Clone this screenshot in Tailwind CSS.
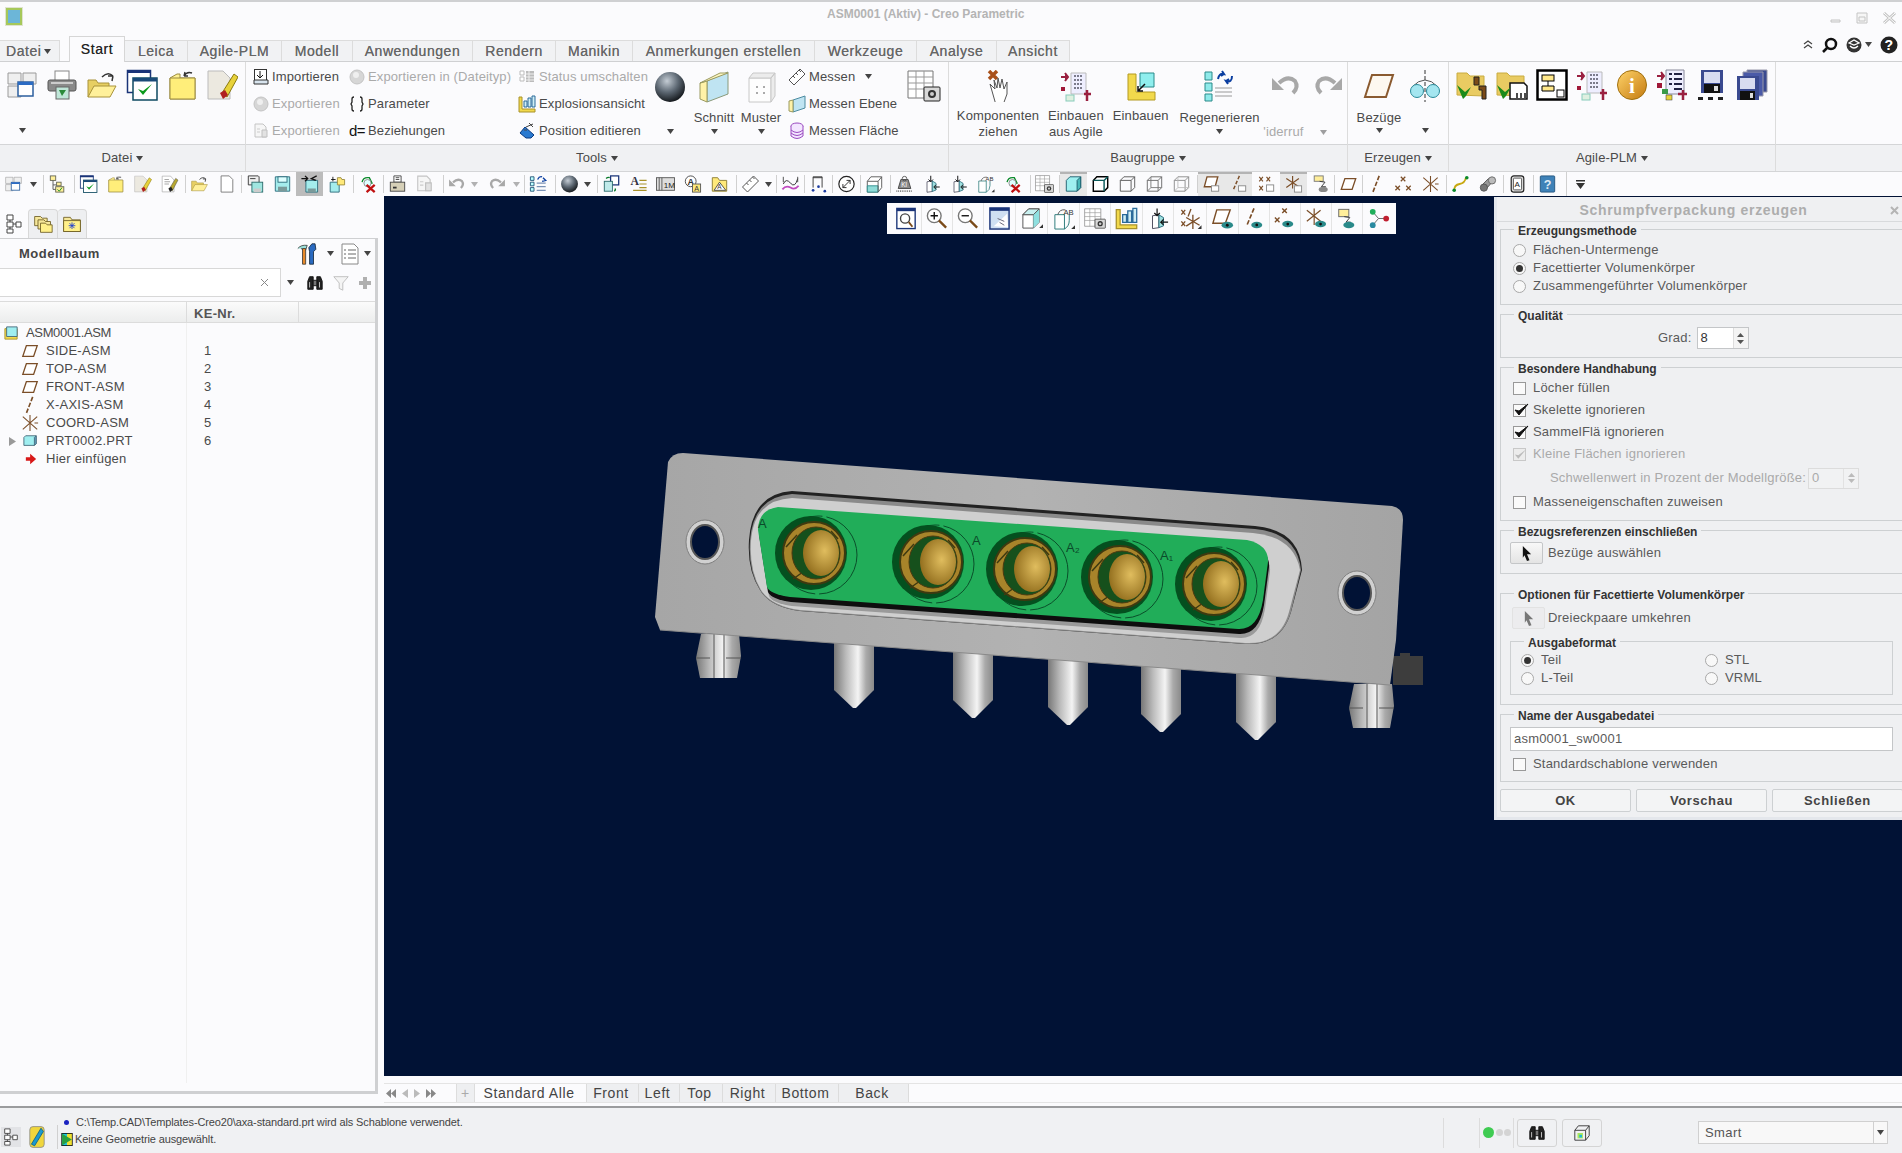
<!DOCTYPE html>
<html lang="de">
<head>
<meta charset="UTF-8">
<title>ASM0001 (Aktiv) - Creo Parametric</title>
<script src="https://cdn.jsdelivr.net/npm/@tailwindcss/browser@4"></script>
</head>
<body class="w-[1902px] h-[1153px] overflow-hidden bg-[#fbfbfd] text-[13px] text-[#4a4a4a] [font-family:'Liberation_Sans',Arial,sans-serif]">

<!-- shared gradients -->
<svg class="absolute h-0 w-0">
  <defs>
    <radialGradient id="gBall" cx="40%" cy="30%" r="75%"><stop offset="0" stop-color="#c4ccd4"/><stop offset=".5" stop-color="#5d6873"/><stop offset="1" stop-color="#0c0f12"/></radialGradient>
    <linearGradient id="gGold" x1="0" y1="0" x2="1" y2="1"><stop offset="0" stop-color="#ffd36a"/><stop offset="1" stop-color="#c47a10"/></linearGradient>
    <linearGradient id="gPin" x1="0" x2="1"><stop offset="0" stop-color="#777"/><stop offset=".3" stop-color="#bbb"/><stop offset=".6" stop-color="#f4f4f4"/><stop offset=".8" stop-color="#aaa"/><stop offset="1" stop-color="#8a8a8a"/></linearGradient>
    <linearGradient id="gPlate" x1="0" y1="0" x2="1" y2="0"><stop offset="0" stop-color="#a6a6a6"/><stop offset=".5" stop-color="#b2b2b2"/><stop offset="1" stop-color="#a4a4a4"/></linearGradient>
    <radialGradient id="gCone" cx="60%" cy="45%" r="60%"><stop offset="0" stop-color="#e0bd5e"/><stop offset="1" stop-color="#94701f"/></radialGradient>
  </defs>
</svg>

<!-- icon sheet -->
<svg class="hidden">
  <symbol id="dd" viewBox="0 0 7 5"><path d="M0 0h7L3.500 5z" fill="#444"/></symbol>
  <symbol id="win" viewBox="0 0 32 32"><path fill="#efefef" stroke="#9a9a9a" d="M2 4h13v11H2zM17 4h13v11H17zM2 17h13v11H2z"/><rect x="12" y="13" width="15" height="14" fill="#fff" stroke="#2c5f9e" stroke-width="1.500"/><rect x="12" y="13" width="15" height="3" fill="#2c6cc4"/></symbol>
  <symbol id="print" viewBox="0 0 32 32"><rect x="9" y="2" width="14" height="12" fill="#fff" stroke="#888"/><rect x="2" y="11" width="28" height="11" rx="2" fill="#8a8a8a" stroke="#555"/><rect x="5" y="13" width="22" height="2" fill="#ccc"/><rect x="10" y="18" width="13" height="12" fill="#bfe6d8" stroke="#666"/><path d="M13 21l3 6 4-6" fill="#2a8a3a"/></symbol>
  <symbol id="fopen" viewBox="0 0 32 32"><path d="M2 28V11h8l2 3h11v4" fill="#e7cf63" stroke="#a8923a"/><path d="M2 28l6-11h22l-6 11z" fill="#fff09a" stroke="#a8923a"/><path d="M16 8q6-6 11-1m0 0l-1 5m1-5l-5 0" fill="none" stroke="#333" stroke-width="1.500"/></symbol>
  <symbol id="chk" viewBox="0 0 32 32"><rect x="1.500" y="1.500" width="23" height="22" fill="#fff" stroke="#1a3478" stroke-width="1.500"/><rect x="1" y="1" width="24" height="3" fill="#1a3478"/><rect x="7" y="9" width="24" height="22" fill="#fff" stroke="#0e4a60" stroke-width="1.500"/><rect x="7" y="9" width="24" height="3.500" fill="#1a4a78"/><path d="M12 20l5 6 9-11-9 7z" fill="#0b9a1c"/></symbol>
  <symbol id="fold" viewBox="0 0 32 32"><path d="M4 30V9l7-4h3v4h15v21z" fill="#fff294" stroke="#9a8a40"/><path d="M4 30V9h25v21z" fill="#ffee7a" stroke="#9a8a40"/><path d="M18 7q3-5 8-3m-8 3l1-4m-1 4l4 0" fill="none" stroke="#333" stroke-width="1.400"/></symbol>
  <symbol id="edit" viewBox="0 0 32 32"><path d="M2 2h15l7 7v21H2z" fill="#ece9e0" stroke="#bbb"/><path d="M16 24L28 5l4 3-11 20z" fill="#e8d23a" stroke="#8a7a10"/><path d="M14 24l5-3 3 5-5 4z" fill="#b02020"/></symbol>
  <symbol id="edit2" viewBox="0 0 32 32"><path d="M3 2h15l6 7v21H3z" fill="#fff" stroke="#999"/><path d="M7 8h8M7 12h10M7 16h8" stroke="#666"/><path d="M16 24L27 6l4 3-10 19z" fill="#b8a830" stroke="#554"/><path d="M14 24l5-3 3 5-5 4z" fill="#222"/></symbol>
  <symbol id="ball" viewBox="0 0 32 32"><circle cx="16" cy="16" r="15" fill="url(#gBall)"/></symbol>
  <symbol id="schnitt" viewBox="0 0 32 32"><path d="M9 10L30 1v22L9 31z" fill="#bfe4f2" stroke="#8a9a7a"/><path d="M2 12l7-2v21l-7-3z" fill="#fff2a8" stroke="#9a9a60"/><path d="M2 12L22 2h8L9 10z" fill="#fdf6c0" stroke="#9a9a60"/></symbol>
  <symbol id="muster" viewBox="0 0 32 32"><path d="M4 7h22v24H4z" fill="#fdfdfd" stroke="#c8c8c8"/><path d="M26 7l4-5v23l-4 6zM4 7l4-5h22l-4 5z" fill="#ececec" stroke="#c8c8c8"/><path d="M11 15h2v2h-2zM18 15h2v2h-2zM11 21h2v2h-2zM18 21h2v2h-2z" fill="#aaa"/></symbol>
  <symbol id="tcam" viewBox="0 0 34 32"><path d="M1 1h25v27H1z" fill="#fff" stroke="#777"/><path d="M1 7h25M1 13h25M1 19h25M9 1v27M17 1v27" stroke="#999"/><rect x="17" y="17" width="16" height="14" rx="1" fill="#d8d8d8" stroke="#222"/><circle cx="25" cy="24" r="4" fill="#333"/><circle cx="25" cy="24" r="2" fill="#ccc"/></symbol>
  <symbol id="hand" viewBox="0 0 32 32"><path d="M7 1l8 8M15 1L7 9" stroke="#a8501a" stroke-width="3.500"/><path d="M8 14l5 5-1-9 3 8 1-10 2 10 2-9 2 10 3-7 0 12-4 11H14z" fill="#fff" stroke="#555"/></symbol>
  <symbol id="agin" viewBox="0 0 32 32"><path d="M11 3h15v21H11z" fill="#eef" stroke="#bbb"/><path d="M14 6h9M14 10h9M14 14h9M14 18h9" stroke="#556" stroke-width="1.500" stroke-dasharray="2 1"/><path d="M1 7h7M5 3l3 4-3 4" stroke="#9a2040" fill="#9a2040" stroke-width="2"/><rect x="1" y="17" width="4" height="4" fill="#a01838"/><rect x="6" y="25" width="8" height="6" fill="#dff0e0" stroke="#8cb"/><path d="M24 24h7M27 20v11" stroke="#9a2040" stroke-width="2.500"/></symbol>
  <symbol id="einb" viewBox="0 0 32 32"><path d="M3 4h8v18h19v8H3z" fill="#f2d94c" stroke="#b49a20"/><path d="M15 3h14v14H15z" fill="#8feeee" stroke="#2a8a8a"/><path d="M20 14l-7 7m0-5v5h5" stroke="#111" stroke-width="1.500" fill="none"/></symbol>
  <symbol id="regen" viewBox="0 0 32 32"><path d="M1 2h7v8H1zM1 13h7v8H1zM1 24h7v7H1z" fill="#8feaea" stroke="#2a8a8a"/><path d="M14 9q1-6 6-5l-2-3m2 3l-3 2M28 6q0 7-6 5l2 3m-2-3l3-2" stroke="#0a3ea0" stroke-width="2" fill="none"/><path d="M11 18h17M11 22h17M11 26h17" stroke="#999"/></symbol>
  <symbol id="undo" viewBox="0 0 32 32"><path d="M8 13q9-8 16-2 4 6-2 12" fill="none" stroke="#a8a8a8" stroke-width="4"/><path d="M1 8v12h12z" fill="#a8a8a8"/></symbol>
  <symbol id="redo" viewBox="0 0 32 32"><path d="M24 13q-9-8-16-2-4 6 2 12" fill="none" stroke="#a8a8a8" stroke-width="4"/><path d="M31 8v12H19z" fill="#a8a8a8"/></symbol>
  <symbol id="plane" viewBox="0 0 32 32"><path d="M9 5h21l-7 22H2z" fill="#fdf8f0" stroke="#8a5a30" stroke-width="2"/></symbol>
  <symbol id="plane2" viewBox="0 0 20 20"><path d="M6 4h12l-4 12H2z" fill="#fff" stroke="#7b4e28" stroke-width="1.500"/></symbol>
  <symbol id="mirror" viewBox="0 0 32 32"><path d="M16 0v32" stroke="#333" stroke-dasharray="4 2"/><path d="M3 17q13-14 26 0" fill="none" stroke="#555"/><circle cx="8" cy="21" r="6.500" fill="#a4e6f0" stroke="#2a8a9a"/><circle cx="24" cy="21" r="6.500" fill="#a4e6f0" stroke="#2a8a9a"/></symbol>
  <symbol id="ag1" viewBox="0 0 32 32"><path d="M1 26V4h10l3 3h14v20z" fill="#e9cb62" stroke="#c9ac40"/><path d="M1 16l8 7 6-5-5 9-3 3z" fill="#1a8a1a"/><path d="M18 8h5v8h-5zM23 17h7v13h-4V21h-3z" fill="#7a4a18" stroke="#222"/></symbol>
  <symbol id="ag2" viewBox="0 0 32 32"><path d="M1 26V4h10l3 3h14v20z" fill="#e9cb62" stroke="#c9ac40"/><path d="M14 14h14l3 3v13H14z" fill="#fff" stroke="#111" stroke-width="1.500"/><path d="M1 16l8 7 6-5-5 9-3 3z" fill="#1a8a1a"/><path d="M21 24v5M25 24v5M29 24v5" stroke="#111" stroke-width="1.500"/></symbol>
  <symbol id="ag3" viewBox="0 0 32 32"><rect x="1.500" y="1.500" width="29" height="29" fill="#fff" stroke="#000" stroke-width="2.500"/><rect x="6" y="6" width="12" height="6" fill="#ffe88a" stroke="#000"/><path d="M12 12v5M6 17h12v5H6z" fill="#ffe88a" stroke="#000"/><rect x="21" y="21" width="7" height="7" fill="#fff" stroke="#000"/></symbol>
  <symbol id="ag5" viewBox="0 0 32 32"><circle cx="16" cy="16" r="14.500" fill="url(#gGold)" stroke="#a0700f"/><text x="16" y="24" font-size="21" font-weight="700" font-family="Liberation Serif" text-anchor="middle" fill="#fff">i</text></symbol>
  <symbol id="ag6" viewBox="0 0 32 32"><path d="M10 1h18v24H10z" fill="#eef" stroke="#889"/><path d="M13 5h3M13 10h3M13 15h3M18 5h8M18 10h8M18 15h8M18 20h8" stroke="#224" stroke-width="2"/><path d="M1 7h7M5 3l3 4-3 4" stroke="#9a2040" fill="#9a2040" stroke-width="2"/><rect x="1" y="14" width="5" height="5" fill="#a01838"/><rect x="6" y="20" width="6" height="5" fill="#3a9a4a"/><rect x="10" y="26" width="6" height="5" fill="#e8d23a" stroke="#333" stroke-width=".5"/><path d="M22 25h9M27 21v10" stroke="#9a2040" stroke-width="2.500"/></symbol>
  <symbol id="ag7" viewBox="0 0 32 32"><path d="M5 1h22v23H5z" fill="#3a4a90"/><path d="M8 3h16v11H8z" fill="#d8dcf0"/><path d="M8 15h16v9H8z" fill="#111"/><rect x="18" y="17" width="4" height="5" fill="#ddd"/><path d="M2 28h5v3H2zM12 28h5v3h-5zM22 28h5v3h-5z" fill="#222"/></symbol>
  <symbol id="ag8" viewBox="0 0 32 32"><path d="M11 1h20v22H11z" fill="#3a4a90" stroke="#99a"/><path d="M7 3h20v24H7z" fill="#4a5aa8" stroke="#99a"/><path d="M1 7h22v24H1z" fill="#3a4a90"/><path d="M4 9h15v11H4z" fill="#d8dcf0"/><path d="M4 22h15v9H4z" fill="#111"/><rect x="14" y="24" width="3" height="5" fill="#ddd"/></symbol>
  <symbol id="import" viewBox="0 0 16 16"><rect x="1.500" y=".5" width="12" height="13" fill="#fff" stroke="#333"/><path d="M7 2v7m-3-3l3 3 3-3" fill="none" stroke="#111"/><path d="M1 11h14v4H1z" fill="#d8e4ee" stroke="#333"/></symbol>
  <symbol id="gball" viewBox="0 0 16 16"><circle cx="8" cy="8" r="7" fill="#d6d6d6" stroke="#c4c4c4"/><circle cx="7" cy="6" r="3" fill="#efefef"/></symbol>
  <symbol id="gexp" viewBox="0 0 16 16"><path d="M2 1h8l3 3v10H2z" fill="#f6f6f6" stroke="#c4c4c4"/><path d="M9 7h5v7H9z" fill="#e2e2e2" stroke="#c0c0c0"/><path d="M4 6h3M4 9h3" stroke="#ccc"/></symbol>
  <symbol id="brace" viewBox="0 0 16 16"><path d="M5 1Q3 1 3 3v3L2 8l1 2v3q0 2 2 2M11 1q2 0 2 2v3l1 2-1 2v3q0 2-2 2" fill="none" stroke="#222" stroke-width="1.300"/></symbol>
  <symbol id="stat" viewBox="0 0 16 16"><path d="M1 2h4v4H1zM1 8h4v4H1z" fill="#fff" stroke="#bbb"/><rect x="7" y="2" width="8" height="11" fill="#bbb"/><path d="M7 5h8M7 8h8M7 11h8M10 2v11" stroke="#eee"/></symbol>
  <symbol id="expl" viewBox="0 0 18 18"><path d="M1 2h3v12h13v3H1z" fill="#f2d94c" stroke="#a8922a"/><path d="M6 6h3v6H6zM10 3h3v9h-3zM14 1h3v11h-3z" fill="#cfeef5" stroke="#2a6a9a"/></symbol>
  <symbol id="pos" viewBox="0 0 18 18"><path d="M2 11l5-6 9 8-3 3H8z" fill="#2a7ad0" stroke="#0a3a80"/><path d="M8 5l7-3M11 1l4 4M6 8h3" stroke="#444"/></symbol>
  <symbol id="ruler" viewBox="0 0 18 18"><path d="M1 12L12 1l5 5L6 17z" fill="#fff" stroke="#555"/><path d="M5 8l2 2M8 5l2 2M11 2l2 2" stroke="#555"/></symbol>
  <symbol id="mplane" viewBox="0 0 18 18"><path d="M5 5l12-4v12L5 17z" fill="#bfe4f2" stroke="#4a8aa0"/><path d="M1 6l4-1v12l-4-1z" fill="#fff2a8" stroke="#9a9a60"/></symbol>
  <symbol id="marea" viewBox="0 0 18 18"><ellipse cx="9" cy="4" rx="6" ry="3" fill="#f3e6ff" stroke="#9a4ac0"/><path d="M3 4v10q6 5 12 0V4M3 8q6 5 12 0M3 11q6 5 12 0" fill="#f3e6ff" stroke="#9a4ac0"/></symbol>
  <symbol id="tree" viewBox="0 0 20 20"><rect x="2" y="1" width="6" height="5" fill="#fff09a" stroke="#665"/><path d="M5 6v10h4M5 11h4" stroke="#555" fill="none"/><rect x="9" y="8" width="5" height="4" fill="#fff09a" stroke="#665"/><rect x="8" y="13" width="9" height="6" fill="#fff09a" stroke="#665"/><path d="M10 16l2 2 3-4" stroke="#0a8a1a" fill="none"/></symbol>
  <symbol id="doc" viewBox="0 0 20 20"><path d="M4 1h9l4 4v14H4z" fill="#fff" stroke="#777"/></symbol>
  <symbol id="savea" viewBox="0 0 20 20"><path d="M2 1h11l1 1v9H2z" fill="#eee" stroke="#333"/><rect x="6" y="8" width="12" height="11" fill="#9fe6e0" stroke="#2a6a6a"/><path d="M4 4h6" stroke="#333"/><rect x="8" y="15" width="8" height="4" fill="#ccc"/></symbol>
  <symbol id="save" viewBox="0 0 20 20"><path d="M2 2h16v16H2z" fill="#a4ecec" stroke="#2a6a7a"/><rect x="5" y="2" width="10" height="6" fill="#dff" stroke="#2a6a7a"/><rect x="5" y="13" width="10" height="5" fill="#7a9a9a"/></symbol>
  <symbol id="savear" viewBox="0 0 20 20"><path d="M6 6h13v13H6z" fill="#a4ecec" stroke="#2a6a7a"/><rect x="8" y="15" width="9" height="4" fill="#7a9a9a"/><path d="M1 4h7m-3-3l3 3-3 3M18 1l-6 3 5 2" stroke="#111" fill="none" stroke-width="1.400"/></symbol>
  <symbol id="savefl" viewBox="0 0 20 20"><path d="M3 8h10v11H3z" fill="#a4ecec" stroke="#2a6a7a"/><path d="M11 3h4l1 2h3v6h-8z" fill="#ffe97a" stroke="#9a8a40"/><path d="M4 5h5M6 2v5" stroke="#111"/></symbol>
  <symbol id="regx" viewBox="0 0 20 20"><path d="M4 8q1-6 8-5l3 6-4 1" fill="#fff" stroke="#0a8a2a" stroke-width="1.500"/><circle cx="10" cy="9" r="4" fill="#dff" stroke="#888"/><path d="M9 11l9 8m0-8l-9 8" stroke="#c01010" stroke-width="2.500"/></symbol>
  <symbol id="prt" viewBox="0 0 20 20"><path d="M6 1h8v7H6z" fill="#fff" stroke="#444"/><path d="M8 3h4M8 5h4" stroke="#444"/><rect x="2" y="8" width="16" height="10" fill="#d6d0b8" stroke="#444"/><path d="M5 13h4v2H5z" fill="#333"/></symbol>
  <symbol id="reglist" viewBox="0 0 20 20"><path d="M1 2h4v4H1zM1 8h4v4H1zM1 14h4v4H1z" fill="#bff" stroke="#257"/><path d="M8 9h10M8 13h10M8 17h10" stroke="#4a6a9a"/><path d="M9 5q2-4 5-3M15 3l3 3-4 1" stroke="#0a3ea0" fill="none" stroke-width="1.500"/></symbol>
  <symbol id="swap" viewBox="0 0 20 20"><rect x="9" y="1" width="9" height="10" fill="#fff" stroke="#1a3478" stroke-width="1.400"/><rect x="2" y="7" width="9" height="11" fill="#bfeaea" stroke="#2a6a6a"/><path d="M4 4q2-2 4-1M14 15q1 2-1 3" stroke="#0a7a2a" fill="none" stroke-width="1.500"/></symbol>
  <symbol id="alist" viewBox="0 0 20 20"><text x="1" y="11" font-size="13" font-weight="700" font-family="Liberation Serif" fill="#334">A</text><path d="M11 6h8M11 10h8M11 14h8M4 17h15" stroke="#a8922a" stroke-width="1.300"/></symbol>
  <symbol id="m1" viewBox="0 0 22 20"><rect x="1" y="3" width="20" height="14" fill="#ddd" stroke="#555"/><path d="M4 3v14M7 3v14" stroke="#555"/><text x="9" y="14" font-size="9" font-family="Liberation Sans" fill="#222">1M</text></symbol>
  <symbol id="an" viewBox="0 0 20 20"><circle cx="8" cy="7" r="6" fill="#fff" stroke="#444"/><text x="4.500" y="11" font-size="10" font-weight="700" fill="#333">A</text><rect x="10" y="10" width="9" height="9" fill="#ffe97a" stroke="#555"/><text x="12" y="18" font-size="8" fill="#333">A</text></symbol>
  <symbol id="af" viewBox="0 0 20 20"><path d="M2 18V3h6l2 3h8v12z" fill="#ffe97a" stroke="#8a7a30"/><path d="M10 8l7 9H4z" fill="#fff" stroke="#444"/><text x="7.500" y="16" font-size="7" fill="#333">A</text></symbol>
  <symbol id="curve" viewBox="0 0 20 20"><path d="M2 10q3-7 8-1t8-5" stroke="#222" fill="none"/><path d="M1 16q4-5 9-2t9-2" stroke="#c04ac0" fill="none" stroke-width="2"/><path d="M2 2v6M18 2v6" stroke="#444"/></symbol>
  <symbol id="dim" viewBox="0 0 20 20"><path d="M4 14V2h10v12M4 3h10" fill="none" stroke="#333"/><circle cx="4" cy="17" r="1.500" fill="#1a3aa0"/><circle cx="10" cy="13" r="1.500" fill="#1a3aa0"/><circle cx="17" cy="18" r="1.500" fill="#1a3aa0"/></symbol>
  <symbol id="circ" viewBox="0 0 20 20"><circle cx="10" cy="10" r="8.500" fill="#fff" stroke="#222" stroke-width="1.300"/><path d="M6 14l8-8m0 0h-4m4 0v4M6 14h4M6 14v-4" stroke="#222" fill="none"/></symbol>
  <symbol id="cubem" viewBox="0 0 20 20"><path d="M2 7l4-5h12v12l-4 5H2z" fill="#fff" stroke="#555"/><path d="M2 12h12v7H2z" fill="#8fdcd8" stroke="#2a8a8a"/><path d="M2 7h12v12M14 7l4-5" fill="none" stroke="#555"/></symbol>
  <symbol id="mass" viewBox="0 0 20 20"><path d="M6 5h8l3 10H3z" fill="#8a8a8a" stroke="#444"/><circle cx="10" cy="4" r="2.500" fill="none" stroke="#555"/><text x="6.500" y="13" font-size="7" fill="#fff">Kl</text><path d="M1 18h18" stroke="#777" stroke-width="2" stroke-dasharray="1 1"/></symbol>
  <symbol id="sh1" viewBox="0 0 20 20"><path d="M2 6l4-4h12v12l-4 4H2z" fill="#9ff0f0" stroke="#1a5a6a"/><path d="M14 6v12l4-4V2z" fill="#48b8b8" stroke="#1a5a6a"/></symbol>
  <symbol id="sh2" viewBox="0 0 20 20"><path d="M2 6l4-4h12v12l-4 4H2z" fill="#fff" stroke="#000" stroke-width="1.600"/><path d="M2 6h12v12M14 6l4-4" fill="none" stroke="#0a5a5a" stroke-width="1.600"/></symbol>
  <symbol id="sh3" viewBox="0 0 20 20"><path d="M2 6l4-4h12v12l-4 4H2zM2 6h12v12M14 6l4-4" fill="none" stroke="#555"/></symbol>
  <symbol id="sh4" viewBox="0 0 20 20"><path d="M2 6l4-4h12v12l-4 4H2zM2 6h12v12M14 6l4-4" fill="none" stroke="#666"/><path d="M6 2v12h12M6 14l-4 4" fill="none" stroke="#777"/></symbol>
  <symbol id="sh5" viewBox="0 0 20 20"><path d="M2 6l4-4h12v12l-4 4H2zM2 6h12v12M14 6l4-4" fill="none" stroke="#888"/><path d="M6 2v12h12M6 14l-4 4" fill="none" stroke="#bbb"/></symbol>
  <symbol id="tp" viewBox="0 0 20 20"><path d="M5 2h12l-3 11H2z" fill="#fff" stroke="#7b4e28" stroke-width="1.500"/><rect x="10" y="12" width="8" height="6" fill="#fff" stroke="#888"/></symbol>
  <symbol id="ta" viewBox="0 0 20 20"><path d="M11 1L4 17" stroke="#7b4e28" stroke-width="1.600" stroke-dasharray="4 2"/><rect x="10" y="12" width="8" height="6" fill="#fff" stroke="#888"/></symbol>
  <symbol id="tx" viewBox="0 0 20 20"><path d="M2 2l4 5M6 2L2 7M10 2l4 5M14 2l-4 5M2 12l4 5M6 12l-4 5" stroke="#7b4e28" stroke-width="1.300"/><rect x="10" y="11" width="8" height="7" fill="#fff" stroke="#888"/></symbol>
  <symbol id="tc" viewBox="0 0 20 20"><path d="M9 1v14M2 4l14 9M2 14l14-10" stroke="#7b4e28" stroke-width="1.300"/><rect x="11" y="12" width="8" height="7" fill="#fff" stroke="#888"/></symbol>
  <symbol id="note" viewBox="0 0 20 20"><rect x="3" y="1" width="10" height="6" fill="#ffee9a" stroke="#777"/><path d="M9 7l6 1-4 5h5" fill="none" stroke="#333"/><ellipse cx="13" cy="16" rx="5" ry="3" fill="#888"/></symbol>
  <symbol id="ax" viewBox="0 0 20 20"><path d="M13 1L6 19" stroke="#7b4e28" stroke-width="1.800" stroke-dasharray="5 2"/></symbol>
  <symbol id="pt" viewBox="0 0 20 20"><path d="M7 2l5 5M12 2L7 7M1 12l5 5M6 12l-5 5M13 12l5 5M18 12l-5 5" stroke="#7b4e28" stroke-width="1.400"/></symbol>
  <symbol id="cs" viewBox="0 0 20 20"><path d="M10 1v18M2 3l16 14M2 17L18 3M15 10h4" stroke="#7b4e28" stroke-width="1.200"/></symbol>
  <symbol id="spl" viewBox="0 0 20 20"><path d="M3 17q0-6 6-7t7-7" fill="none" stroke="#c8a810" stroke-width="2"/><circle cx="3" cy="17" r="2" fill="#0a8a2a"/><circle cx="17" cy="3" r="2" fill="#0a8a2a"/></symbol>
  <symbol id="link" viewBox="0 0 20 20"><path d="M3 12l8-8 5 3-8 9z" fill="#999" stroke="#555"/><circle cx="15" cy="6" r="4" fill="#bbb" stroke="#666"/><circle cx="6" cy="14" r="4" fill="#777" stroke="#555"/></symbol>
  <symbol id="akey" viewBox="0 0 20 20"><rect x="3" y="1" width="14" height="18" rx="3" fill="#ddd" stroke="#222" stroke-width="1.300"/><rect x="5.500" y="3.500" width="9" height="13" rx="1" fill="#fff" stroke="#555"/><text x="6.800" y="13" font-size="9" fill="#222">A</text></symbol>
  <symbol id="qm" viewBox="0 0 20 20"><rect x="2" y="1" width="16" height="18" rx="1" fill="#3f82b8" stroke="#23557e"/><text x="10" y="15" font-size="14" font-weight="700" text-anchor="middle" fill="#dfeaf4">?</text></symbol>
  <symbol id="zfit" viewBox="0 0 24 24"><rect x="2" y="1" width="20" height="22" fill="#fff" stroke="#1a3478" stroke-width="1.500"/><rect x="2" y="1" width="20" height="3" fill="#1a3478"/><circle cx="11" cy="12" r="5" fill="#fff" stroke="#444" stroke-width="1.500"/><path d="M15 16l4 5" stroke="#7a4a18" stroke-width="2"/></symbol>
  <symbol id="zin" viewBox="0 0 24 24"><circle cx="9" cy="9" r="7.500" fill="#fff" stroke="#777" stroke-width="1.500"/><path d="M5 9h8M9 5v8" stroke="#111" stroke-width="1.500"/><path d="M14 14l8 8" stroke="#7a4a18" stroke-width="2.500"/></symbol>
  <symbol id="zout" viewBox="0 0 24 24"><circle cx="9" cy="9" r="7.500" fill="#fff" stroke="#777" stroke-width="1.500"/><path d="M5 9h8" stroke="#111" stroke-width="1.500"/><path d="M14 14l8 8" stroke="#7a4a18" stroke-width="2.500"/></symbol>
  <symbol id="repaint" viewBox="0 0 24 24"><rect x="2" y="1" width="20" height="22" fill="#cfe0f2" stroke="#1a3478" stroke-width="1.500"/><rect x="2" y="1" width="20" height="3" fill="#1a3478"/><path d="M6 20L20 7l1 14z" fill="#fff"/><path d="M12 16l5 3M10 12l7 3" stroke="#667"/></symbol>
  <symbol id="vcube" viewBox="0 0 24 24"><path d="M3 8l6-6h11v14l-6 6H3z" fill="#fff" stroke="#555"/><path d="M3 8h11v14M14 8l6-6" fill="none" stroke="#555"/><path d="M14 8l6-6v14l-6 6z" fill="#8fe0e0"/><path d="M3 8l6-6h11l-6 6z" fill="#c8f0f0" stroke="#555"/><path d="M20 22h4v-4z" fill="#333"/></symbol>
  <symbol id="vab" viewBox="0 0 24 24"><path d="M3 8h10v15H3z" fill="#fff" stroke="#2a7a7a"/><path d="M13 23q5-3 5-9V8" fill="none" stroke="#2a7a7a"/><path d="M6 8q2-6 8-5" fill="none" stroke="#555"/><text x="12" y="8" font-size="8" fill="#333">AB</text><path d="M20 23h4v-4z" fill="#333"/></symbol>
  <symbol id="orient" viewBox="0 0 24 24"><path d="M6 9l7-1v14l-7 1z" fill="#fff" stroke="#445"/><path d="M13 8l5 3v9l-5 2z" fill="#9fe0e0" stroke="#267"/><path d="M11 1v7m-3-2l3 3 3-3M23 16h-7m2-3l-3 3 3 3" stroke="#111" fill="none" stroke-width="1.300"/></symbol>
  <symbol id="datm" viewBox="0 0 24 24"><path d="M3 3l4 5M7 3L3 8M3 15l4 5M7 15l-4 5M13 2L10 10M15 8v15M8 11l14 8M8 20L22 11" stroke="#7b4e28" stroke-width="1.400"/><path d="M20 23h4v-4z" fill="#333"/></symbol>
  <symbol id="eyep" viewBox="0 0 24 24"><path d="M6 3h14l-5 14H2z" fill="#fff" stroke="#7b4e28" stroke-width="1.500"/><ellipse cx="17" cy="19" rx="6" ry="3.500" fill="#2a8a8a"/><circle cx="17" cy="19" r="1.500" fill="#111"/></symbol>
  <symbol id="eyea" viewBox="0 0 24 24"><path d="M12 1L4 20" stroke="#7b4e28" stroke-width="1.800" stroke-dasharray="5 2"/><ellipse cx="15" cy="19" rx="6" ry="3.500" fill="#2a8a8a"/><circle cx="15" cy="19" r="1.500" fill="#111"/></symbol>
  <symbol id="eyex" viewBox="0 0 24 24"><path d="M9 1l5 5M14 1L9 6M1 11l5 5M6 11l-5 5" stroke="#7b4e28" stroke-width="1.500"/><ellipse cx="15" cy="18" rx="6" ry="3.500" fill="#2a8a8a"/><circle cx="15" cy="18" r="1.500" fill="#111"/></symbol>
  <symbol id="eyec" viewBox="0 0 24 24"><path d="M10 1v18M2 3l15 12M2 15L17 3" stroke="#7b4e28" stroke-width="1.300"/><ellipse cx="17" cy="18" rx="6" ry="3.500" fill="#2a8a8a"/><circle cx="17" cy="18" r="1.500" fill="#111"/></symbol>
  <symbol id="eyen" viewBox="0 0 24 24"><rect x="3" y="2" width="11" height="8" fill="#ffee9a" stroke="#666"/><path d="M9 10l6 1-4 5h5" fill="none" stroke="#333"/><ellipse cx="14" cy="19" rx="6" ry="3.500" fill="#2a8a8a"/></symbol>
  <symbol id="spin" viewBox="0 0 24 24"><path d="M6 5l6 7-6 7M12 12h9" fill="none" stroke="#666"/><circle cx="6" cy="5" r="3" fill="#1fae5a"/><circle cx="6" cy="19" r="3" fill="#2a8aa0"/><circle cx="20" cy="12" r="3" fill="#c02030"/></symbol>
  <symbol id="ftree" viewBox="0 0 20 20"><path d="M3 1h6v5H3zM3 8h6v5H3zM3 15h6v4H3zM12 8h5v5h-5z" fill="#fff" stroke="#444"/><path d="M6 6v2M6 13v2M9 10h3" stroke="#444"/></symbol>
  <symbol id="ffold" viewBox="0 0 24 24"><path d="M2 14V3h7l2 2h6v9z" fill="#f6e79a" stroke="#6a5a20"/><path d="M6 18V7h7l2 2h6v9z" fill="#f6e79a" stroke="#6a5a20"/><path d="M9 22V11h6l2 2h6v9z" fill="#fff08a" stroke="#6a5a20"/></symbol>
  <symbol id="ffav" viewBox="0 0 24 24"><path d="M2 21V4h8l2 3h10v14z" fill="#f6e79a" stroke="#6a5a20"/><rect x="2" y="8" width="20" height="13" fill="#fff08a" stroke="#6a5a20"/><path d="M12 10v8M8 14h8M9 11l6 6M15 11l-6 6" stroke="#1a3ad0"/></symbol>
  <symbol id="wrench" viewBox="0 0 28 28"><path d="M1 7q4-5 12-4l-2 6H9L5 7" fill="#9adfd8" stroke="#333"/><path d="M7 7h4v20H7z" fill="#e88a2a" stroke="#333"/><path d="M15 6l4-5h4l1 7-3 3v16h-5V11z" fill="#2a6ac0" stroke="#123"/></symbol>
  <symbol id="lst" viewBox="0 0 18 22"><path d="M1 1h12l4 4v16H1z" fill="#fff" stroke="#888"/><path d="M3 7h2M3 11h2M3 15h2M7 7h8M7 11h8M7 15h8" stroke="#666"/></symbol>
  <symbol id="bino" viewBox="0 0 20 20"><path d="M2 8l2-5h4v14H2zM12 3h4l2 5v9h-6z" fill="#222" stroke="#111"/><path d="M8 7h4v6H8z" fill="#777" stroke="#111"/><path d="M4 9v6M15 9v6" stroke="#ccc"/></symbol>
  <symbol id="funnel" viewBox="0 0 20 20"><path d="M2 3h16l-6 7v8l-4-2v-6z" fill="#f4f4f4" stroke="#bbb"/></symbol>
  <symbol id="plus" viewBox="0 0 12 12"><path d="M4 0h4v4h4v4H8v4H4V8H0V4h4z" fill="#b0b0b0"/></symbol>
  <symbol id="rootp" viewBox="0 0 16 16"><path d="M1 3h14v12H1z" fill="#f2d94c" stroke="#a8922a"/><path d="M3 1h12v11H3z" fill="#9feef0" stroke="#467"/></symbol>
  <symbol id="part" viewBox="0 0 16 16"><path d="M1 4l2-2h12v9l-2 2H1z" fill="#9feef0" stroke="#467"/><path d="M13 4v9l2-2V2z" fill="#6ac" stroke="#467"/></symbol>
  <symbol id="here" viewBox="0 0 14 14"><path d="M1 5h5V1l7 6-7 6V9H1z" fill="#d81818"/></symbol>
  <symbol id="globe" viewBox="0 0 22 30"><rect x="2" y="2" width="18" height="26" rx="4" fill="#f0d63c" stroke="#888"/><path d="M4 24L16 4l3 4-11 18z" fill="#1a9ad0" stroke="#0a5a80"/></symbol>
  <symbol id="kg" viewBox="0 0 14 16"><rect width="14" height="16" fill="#111"/><path d="M1 1h6v14H1z" fill="#1fc0e0"/><path d="M7 1h6v14H7z" fill="#f0e030"/><path d="M1 1l12 7L1 15z" fill="#28a040"/></symbol>
  <symbol id="scube" viewBox="0 0 20 20"><path d="M2 7l4-5h12v11l-4 5H2zM2 7h12v11M14 7l4-5" fill="none" stroke="#333"/><rect x="5" y="10" width="6" height="6" fill="#a8e85a"/><rect x="7" y="12" width="3" height="3" fill="#1fb8d8"/></symbol>
  <symbol id="arrow" viewBox="0 0 14 18"><path d="M2 0l10 10H7l3 7-3 1-3-7-2 3z" fill="#111"/></symbol>
  <symbol id="arrowg" viewBox="0 0 14 18"><path d="M2 0l10 10H7l3 7-3 1-3-7-2 3z" fill="#777"/></symbol>
</svg>

<!-- title bar -->
<header class="flex h-[41px] items-start border-t-2 border-[#cfd0d2]">
  <div class="ml-[6px] mt-[6px] h-[17px] w-[16px] border-2 border-[#a6c85a] bg-[#6cb6d8] outline outline-[#dfe4d0]"></div>
  <div class="ml-[805px] mt-[4px] w-[200px] text-[12px] font-bold leading-4 text-[#b4b4b4]">ASM0001 (Aktiv) - Creo Parametric</div>
  <div class="ml-auto mr-[5px] mt-[9px] flex items-center gap-[12px]">
    <svg class="h-[14px] w-[15px]" viewBox="0 0 15 14"><path d="M3 9h9v2H3z" fill="#f2f2f2" stroke="#c4c4c4"/></svg>
    <svg class="h-[14px] w-[15px]" viewBox="0 0 15 14"><path d="M2 2h10v10H2zM4 6h6v4H4z" fill="#f6f6f6" stroke="#c4c4c4"/></svg>
    <svg class="h-[14px] w-[15px]" viewBox="0 0 15 14"><path d="M2 2l11 10M13 2L2 12" stroke="#c4c4c4" stroke-width="3"/><path d="M2 2l11 10M13 2L2 12" stroke="#fff"/></svg>
  </div>
</header>

<!-- tabs -->
<nav class="flex h-[21px] items-end border-b border-[#cfd0d2] text-[14px] tracking-[0.55px] text-[#666] [text-shadow:0_0_0.6px_#777]">
  <div class="flex h-[21px] w-[60px] items-center gap-[3px] border-r border-t border-[#dcdcdc] bg-[#f1f2f4] pl-[6px]">Datei<svg class="h-[5px] w-[7px]"><use href="#dd"/></svg></div>
  <div class="ml-[9px] -mb-px flex h-[26px] w-[56px] items-center justify-center border-x border-t border-[#d6d6d6] bg-[#fbfbfd] text-[#222]">Start</div>
  <div class="flex h-[21px] w-[63px] items-center justify-center border-r border-t border-[#dcdcdc] bg-[#f1f2f4]">Leica</div>
  <div class="flex h-[21px] w-[94px] items-center justify-center border-r border-t border-[#dcdcdc] bg-[#f1f2f4]">Agile-PLM</div>
  <div class="flex h-[21px] w-[71px] items-center justify-center border-r border-t border-[#dcdcdc] bg-[#f1f2f4]">Modell</div>
  <div class="flex h-[21px] w-[120px] items-center justify-center border-r border-t border-[#dcdcdc] bg-[#f1f2f4]">Anwendungen</div>
  <div class="flex h-[21px] w-[83px] items-center justify-center border-r border-t border-[#dcdcdc] bg-[#f1f2f4]">Rendern</div>
  <div class="flex h-[21px] w-[77px] items-center justify-center border-r border-t border-[#dcdcdc] bg-[#f1f2f4]">Manikin</div>
  <div class="flex h-[21px] w-[182px] items-center justify-center border-r border-t border-[#dcdcdc] bg-[#f1f2f4]">Anmerkungen erstellen</div>
  <div class="flex h-[21px] w-[102px] items-center justify-center border-r border-t border-[#dcdcdc] bg-[#f1f2f4]">Werkzeuge</div>
  <div class="flex h-[21px] w-[80px] items-center justify-center border-r border-t border-[#dcdcdc] bg-[#f1f2f4]">Analyse</div>
  <div class="flex h-[21px] w-[73px] items-center justify-center border-r border-t border-[#dcdcdc] bg-[#f1f2f4]">Ansicht</div>
  <div class="mb-[6px] ml-[728px] flex h-[21px] items-center">
    <svg class="ml-[4px] h-[12px] w-[12px] self-center" viewBox="0 0 12 12"><path d="M2 5l4-3 4 3M2 9l4-3 4 3" fill="none" stroke="#444" stroke-width="1.200"/></svg>
    <svg class="ml-[8px] h-[16px] w-[16px]" viewBox="0 0 16 16"><circle cx="9" cy="7" r="5" fill="none" stroke="#111" stroke-width="2.500"/><path d="M5 11l-4 4" stroke="#111" stroke-width="2.500"/></svg>
    <svg class="ml-[8px] h-[16px] w-[16px]" viewBox="0 0 16 16"><circle cx="8" cy="8" r="7.500" fill="#333"/><path d="M3 6l5-3 5 3-5 2zM4 9q4 4 8 0" fill="none" stroke="#fff" stroke-width="1.300"/></svg>
    <svg class="ml-[3px] h-[5px] w-[7px]"><use href="#dd"/></svg>
    <svg class="ml-[8px] h-[18px] w-[18px]" viewBox="0 0 18 18"><circle cx="9" cy="9" r="8.500" fill="#222"/><text x="9" y="14" font-size="14" font-weight="700" text-anchor="middle" fill="#fff">?</text></svg>
  </div>
</nav>

<!-- ribbon -->
<section class="flex h-[110px] border-b border-[#d4d5d7] tracking-[0.12px]">
  <!-- Datei -->
  <div class="flex w-[246px] flex-col border-r border-[#dcdcdc]">
    <div class="h-[83px] pl-[6px] pt-[7px]">
      <div class="flex gap-2">
        <svg class="h-8 w-8"><use href="#win"/></svg>
        <svg class="h-8 w-8"><use href="#print"/></svg>
        <svg class="h-8 w-8"><use href="#fopen"/></svg>
        <svg class="h-8 w-8"><use href="#chk"/></svg>
        <svg class="h-8 w-8"><use href="#fold"/></svg>
        <svg class="h-8 w-8"><use href="#edit"/></svg>
      </div>
      <svg class="ml-[13px] mt-[27px] h-[5px] w-[7px]"><use href="#dd"/></svg>
    </div>
    <div class="flex h-[27px] items-center justify-center gap-1 border-t border-[#d4d5d7] bg-[#f0f1f3]">Datei<svg class="h-[5px] w-[7px]"><use href="#dd"/></svg></div>
  </div>
  <!-- Tools -->
  <div class="flex w-[703px] flex-col border-r border-[#dcdcdc]">
    <div class="flex h-[83px] pl-[7px] pt-px">
      <div class="w-[96px]">
        <div class="flex h-[27px] items-center gap-[3px]"><svg class="h-4 w-4"><use href="#import"/></svg>Importieren</div>
        <div class="flex h-[27px] items-center gap-[3px] text-[#aaa]"><svg class="h-4 w-4"><use href="#gball"/></svg>Exportieren</div>
        <div class="flex h-[27px] items-center gap-[3px] text-[#aaa]"><svg class="h-4 w-4"><use href="#gexp"/></svg>Exportieren</div>
      </div>
      <div class="w-[169px]">
        <div class="flex h-[27px] items-center gap-[3px] text-[#aaa]"><svg class="h-4 w-4"><use href="#gball"/></svg>Exportieren in (Dateityp)</div>
        <div class="flex h-[27px] items-center gap-[3px]"><svg class="h-4 w-4"><use href="#brace"/></svg>Parameter</div>
        <div class="flex h-[27px] items-center gap-[3px]"><span class="w-4 text-[15px] leading-4 tracking-[-0.6px] text-[#111]">d=</span>Beziehungen</div>
      </div>
      <div class="w-[135px]">
        <div class="flex h-[27px] items-center gap-[3px] text-[#aaa]"><svg class="h-[16px] w-[18px]"><use href="#stat"/></svg>Status umschalten</div>
        <div class="flex h-[27px] items-center gap-[3px]"><svg class="h-[18px] w-[18px]"><use href="#expl"/></svg>Explosionsansicht</div>
        <div class="flex h-[27px] items-center gap-[3px]"><svg class="h-[18px] w-[18px]"><use href="#pos"/></svg>Position editieren</div>
      </div>
      <div class="flex w-[34px] flex-col items-center">
        <svg class="mt-[8px] h-8 w-8"><use href="#ball"/></svg>
        <svg class="mt-[26px] h-[5px] w-[7px]"><use href="#dd"/></svg>
      </div>
      <div class="flex w-[54px] flex-col items-center">
        <svg class="mt-[8px] h-8 w-8"><use href="#schnitt"/></svg>
        <span class="mt-[7px] leading-4">Schnitt</span>
        <svg class="mt-[3px] h-[5px] w-[7px]"><use href="#dd"/></svg>
      </div>
      <div class="flex w-[40px] flex-col items-center">
        <svg class="mt-[8px] h-8 w-8"><use href="#muster"/></svg>
        <span class="mt-[7px] leading-4">Muster</span>
        <svg class="mt-[3px] h-[5px] w-[7px]"><use href="#dd"/></svg>
      </div>
      <div class="ml-[7px] w-[119px]">
        <div class="flex h-[27px] items-center gap-[3px]"><svg class="h-[18px] w-[18px]"><use href="#ruler"/></svg>Messen<svg class="ml-[7px] h-[5px] w-[7px]"><use href="#dd"/></svg></div>
        <div class="flex h-[27px] items-center gap-[3px]"><svg class="h-[18px] w-[18px]"><use href="#mplane"/></svg>Messen Ebene</div>
        <div class="flex h-[27px] items-center gap-[3px]"><svg class="h-[18px] w-[18px]"><use href="#marea"/></svg>Messen Fläche</div>
      </div>
      <svg class="mt-[7px] h-8 w-[34px]"><use href="#tcam"/></svg>
    </div>
    <div class="flex h-[27px] items-center justify-center gap-1 border-t border-[#d4d5d7] bg-[#f0f1f3]">Tools<svg class="h-[5px] w-[7px]"><use href="#dd"/></svg></div>
  </div>
  <!-- Baugruppe -->
  <div class="flex w-[399px] flex-col border-r border-[#dcdcdc]">
    <div class="flex h-[83px] pl-[9px] text-center leading-4">
      <div class="flex w-[80px] flex-col items-center"><svg class="mt-[8px] h-8 w-8 mb-[6px]"><use href="#hand"/></svg>Komponenten<br>ziehen</div>
      <div class="flex w-[76px] flex-col items-center"><svg class="mt-[8px] h-8 w-8 mb-[6px]"><use href="#agin"/></svg>Einbauen<br>aus Agile</div>
      <div class="flex w-[54px] flex-col items-center"><svg class="mt-[8px] h-8 w-8 mb-[6px]"><use href="#einb"/></svg>Einbauen</div>
      <div class="flex w-[104px] flex-col items-center"><svg class="mt-[8px] h-8 w-8 mb-[8px]"><use href="#regen"/></svg>Regenerieren<svg class="mt-[3px] h-[5px] w-[7px]"><use href="#dd"/></svg></div>
      <div class="relative w-[76px]">
        <div class="flex gap-[8px] pt-[8px]"><svg class="h-8 w-8"><use href="#undo"/></svg><svg class="h-8 w-8"><use href="#redo"/></svg></div>
        <div class="-ml-[8px] mt-[22px] flex items-center text-[#aaa]"><span class="w-[41px] whitespace-nowrap text-left">'iderruf</span><svg class="ml-[16px] h-[5px] w-[7px] opacity-50"><use href="#dd"/></svg></div>
      </div>
    </div>
    <div class="flex h-[27px] items-center justify-center gap-1 border-t border-[#d4d5d7] bg-[#f0f1f3]">Baugruppe<svg class="h-[5px] w-[7px]"><use href="#dd"/></svg></div>
  </div>
  <!-- Erzeugen -->
  <div class="flex w-[101px] flex-col border-r border-[#dcdcdc]">
    <div class="flex h-[83px]">
      <div class="flex w-[62px] flex-col items-center"><svg class="mt-[8px] h-8 w-8"><use href="#plane"/></svg><span class="mt-[8px] leading-4">Bezüge</span><svg class="mt-[2px] h-[5px] w-[7px]"><use href="#dd"/></svg></div>
      <div class="flex w-[30px] flex-col items-center"><svg class="mt-[8px] h-8 w-8"><use href="#mirror"/></svg><svg class="mt-[26px] h-[5px] w-[7px]"><use href="#dd"/></svg></div>
    </div>
    <div class="flex h-[27px] items-center justify-center gap-1 border-t border-[#d4d5d7] bg-[#f0f1f3]">Erzeugen<svg class="h-[5px] w-[7px]"><use href="#dd"/></svg></div>
  </div>
  <!-- Agile-PLM -->
  <div class="flex w-[327px] flex-col border-r border-[#dcdcdc]">
    <div class="flex h-[83px] gap-2 pl-[7px] pt-[7px]">
      <svg class="h-8 w-8"><use href="#ag1"/></svg>
      <svg class="h-8 w-8"><use href="#ag2"/></svg>
      <svg class="h-8 w-8"><use href="#ag3"/></svg>
      <svg class="h-8 w-8"><use href="#agin"/></svg>
      <svg class="h-8 w-8"><use href="#ag5"/></svg>
      <svg class="h-8 w-8"><use href="#ag6"/></svg>
      <svg class="h-8 w-8"><use href="#ag7"/></svg>
      <svg class="h-8 w-8"><use href="#ag8"/></svg>
    </div>
    <div class="flex h-[27px] items-center justify-center gap-1 border-t border-[#d4d5d7] bg-[#f0f1f3]">Agile-PLM<svg class="h-[5px] w-[7px]"><use href="#dd"/></svg></div>
  </div>
  <div class="flex flex-1 flex-col"><div class="h-[83px]"></div><div class="h-[27px] border-t border-[#d4d5d7] bg-[#f0f1f3]"></div></div>
</section>

<!-- toolbar -->
<div class="flex h-[24px] items-center">
  <svg class="h-6 w-[27px] p-[3px]"><use href="#win"/></svg>
  <div class="flex w-[12px] justify-center"><svg class="h-[5px] w-[7px]"><use href="#dd"/></svg></div>
  <b class="h-[18px] w-[5px] border-r border-[#d0d0d0]"></b>
  <svg class="h-6 w-[27px] p-[3px]"><use href="#tree"/></svg>
  <b class="h-[18px] w-[4px] border-r border-[#d0d0d0]"></b>
  <svg class="h-6 w-[27px] p-[3px]"><use href="#chk"/></svg>
  <svg class="h-6 w-[27px] p-[3px]"><use href="#fold"/></svg>
  <svg class="h-6 w-[27px] p-[3px]"><use href="#edit"/></svg>
  <svg class="h-6 w-[27px] p-[3px]"><use href="#edit2"/></svg>
  <b class="h-[18px] w-[3px] border-r border-[#d0d0d0]"></b>
  <svg class="h-6 w-[27px] p-[3px]"><use href="#fopen"/></svg>
  <svg class="h-6 w-[27px] p-[3px]"><use href="#doc"/></svg>
  <b class="h-[18px] w-[2px] border-r border-[#d0d0d0]"></b>
  <svg class="h-6 w-[27px] p-[3px]"><use href="#savea"/></svg>
  <svg class="h-6 w-[27px] p-[3px]"><use href="#save"/></svg>
  <svg class="h-6 w-[27px] bg-[#bcbcbc] p-[3px]"><use href="#savear"/></svg>
  <svg class="h-6 w-[27px] p-[3px]"><use href="#savefl"/></svg>
  <b class="h-[18px] w-[4px] border-r border-[#d0d0d0]"></b>
  <svg class="h-6 w-[27px] p-[3px]"><use href="#regx"/></svg>
  <b class="h-[18px] w-[3px] border-r border-[#d0d0d0]"></b>
  <svg class="h-6 w-[27px] p-[3px]"><use href="#prt"/></svg>
  <svg class="h-6 w-[27px] p-[3px]"><use href="#gexp"/></svg>
  <b class="h-[18px] w-[6px] border-r border-[#d0d0d0]"></b>
  <svg class="h-6 w-[27px] p-[3px]"><use href="#undo"/></svg>
  <div class="flex w-[7px] justify-center opacity-40"><svg class="h-[5px] w-[7px] shrink-0"><use href="#dd"/></svg></div>
  <b class="h-[18px] w-[5px]"></b>
  <svg class="h-6 w-[27px] p-[3px]"><use href="#redo"/></svg>
  <div class="flex w-[12px] justify-center opacity-40"><svg class="h-[5px] w-[7px]"><use href="#dd"/></svg></div>
  <b class="h-[18px] w-[3px] border-r border-[#d0d0d0]"></b>
  <svg class="h-6 w-[27px] p-[3px]"><use href="#reglist"/></svg>
  <b class="h-[18px] w-[4px] border-r border-[#d0d0d0]"></b>
  <svg class="h-6 w-[27px] p-[3px]"><use href="#ball"/></svg>
  <div class="flex w-[8px] justify-center"><svg class="h-[5px] w-[7px] shrink-0"><use href="#dd"/></svg></div>
  <b class="h-[18px] w-[7px] border-r border-[#d0d0d0]"></b>
  <svg class="h-6 w-[27px] p-[3px]"><use href="#swap"/></svg>
  <svg class="h-6 w-[27px] p-[3px]"><use href="#alist"/></svg>
  <svg class="h-6 w-[27px] p-[3px]"><use href="#m1"/></svg>
  <svg class="h-6 w-[27px] p-[3px]"><use href="#an"/></svg>
  <svg class="h-6 w-[27px] p-[3px]"><use href="#af"/></svg>
  <b class="h-[18px] w-[4px] border-r border-[#d0d0d0]"></b>
  <svg class="h-6 w-[27px] p-[3px]"><use href="#ruler"/></svg>
  <div class="flex w-[8px] justify-center"><svg class="h-[5px] w-[7px] shrink-0"><use href="#dd"/></svg></div>
  <b class="h-[18px] w-[5px] border-r border-[#d0d0d0]"></b>
  <svg class="h-6 w-[27px] p-[3px]"><use href="#curve"/></svg>
  <b class="h-[18px] w-px bg-[#d0d0d0]"></b>
  <svg class="h-6 w-[27px] p-[3px]"><use href="#dim"/></svg>
  <b class="h-[18px] w-px bg-[#d0d0d0]"></b>
  <svg class="h-6 w-[27px] p-[3px]"><use href="#circ"/></svg>
  <b class="h-[18px] w-px bg-[#d0d0d0]"></b>
  <svg class="h-6 w-[27px] p-[3px]"><use href="#cubem"/></svg>
  <b class="h-[18px] w-[3px] border-r border-[#d0d0d0]"></b>
  <svg class="h-6 w-[27px] p-[3px]"><use href="#mass"/></svg>
  <svg class="h-6 w-[27px] p-[3px]"><use href="#orient"/></svg>
  <svg class="h-6 w-[27px] p-[3px]"><use href="#orient"/></svg>
  <svg class="h-6 w-[27px] p-[3px]"><use href="#vab"/></svg>
  <svg class="h-6 w-[27px] p-[3px]"><use href="#regx"/></svg>
  <b class="h-[18px] w-[5px] border-r border-[#d0d0d0]"></b>
  <svg class="h-6 w-[27px] p-[3px]"><use href="#tcam"/></svg>
  <b class="h-[18px] w-[2px] border-r border-[#d0d0d0]"></b>
  <svg class="h-6 w-[27px] border-t-2 border-[#b4b4b4] bg-[#e8e8e8] p-[3px] pt-px"><use href="#sh1"/></svg>
  <svg class="h-6 w-[27px] p-[3px]"><use href="#sh2"/></svg>
  <svg class="h-6 w-[27px] p-[3px]"><use href="#sh3"/></svg>
  <svg class="h-6 w-[27px] p-[3px]"><use href="#sh4"/></svg>
  <svg class="h-6 w-[27px] p-[3px]"><use href="#sh5"/></svg>
  <b class="h-[18px] w-[3px] border-r border-[#d0d0d0]"></b>
  <svg class="h-6 w-[27px] border-t-2 border-[#b4b4b4] bg-[#e8e8e8] p-[3px] pt-px"><use href="#tp"/></svg>
  <svg class="h-6 w-[27px] border-t-2 border-[#b4b4b4] bg-[#e8e8e8] p-[3px] pt-px"><use href="#ta"/></svg>
  <b class="h-[18px] w-px"></b>
  <svg class="h-6 w-[27px] p-[3px]"><use href="#tx"/></svg>
  <svg class="h-6 w-[27px] border-t-2 border-[#b4b4b4] bg-[#e8e8e8] p-[3px] pt-px"><use href="#tc"/></svg>
  <svg class="h-6 w-[27px] p-[3px]"><use href="#note"/></svg>
  <b class="h-[18px] w-px bg-[#d0d0d0]"></b>
  <svg class="h-6 w-[27px] p-[3px]"><use href="#plane2"/></svg>
  <b class="h-[18px] w-px bg-[#d0d0d0]"></b>
  <svg class="h-6 w-[27px] p-[3px]"><use href="#ax"/></svg>
  <svg class="h-6 w-[27px] p-[3px]"><use href="#pt"/></svg>
  <svg class="h-6 w-[27px] p-[3px]"><use href="#cs"/></svg>
  <b class="h-[18px] w-[3px] border-r border-[#d0d0d0]"></b>
  <svg class="h-6 w-[27px] p-[3px]"><use href="#spl"/></svg>
  <svg class="h-6 w-[27px] p-[3px]"><use href="#link"/></svg>
  <b class="h-[18px] w-[3px] border-r border-[#d0d0d0]"></b>
  <svg class="h-6 w-[27px] p-[3px]"><use href="#akey"/></svg>
  <b class="h-[18px] w-[3px] border-r border-[#d0d0d0]"></b>
  <svg class="h-6 w-[27px] p-[3px]"><use href="#qm"/></svg>
  <b class="h-[24px] w-[6px] border-r border-[#d0d0d0]"></b>
  <svg class="ml-[9px] h-[9px] w-[9px]" viewBox="0 0 9 9"><path d="M0 0h9v1.500H0zM0 3h9L4.500 9z" fill="#333"/></svg>
</div>

<!-- main area -->
<main class="flex h-[910px]">
  <!-- model tree -->
  <aside class="w-[384px] shrink-0 pt-[13px]">
    <div class="flex h-[29px] items-end">
      <div class="flex h-[29px] w-[28px] items-center justify-center"><svg class="h-5 w-5"><use href="#ftree"/></svg></div>
      <div class="flex h-[29px] w-[30px] items-center justify-center rounded-t-sm border-x border-t border-[#d8d8d8] bg-[#eeeff1]"><svg class="h-[20px] w-[20px]"><use href="#ffold"/></svg></div>
      <div class="flex h-[29px] w-[29px] items-center justify-center rounded-t-sm border-r border-t border-[#d8d8d8] bg-[#eeeff1]"><svg class="h-[20px] w-[20px]"><use href="#ffav"/></svg></div>
    </div>
    <div class="h-[856px] w-[378px] border-r-[3px] border-b-[3px] border-t border-[#cfd0d2] border-t-[#cfd0d2]">
      <div class="flex h-[29px] items-center pl-[19px] text-[13px] font-bold tracking-[0.5px] text-[#444]">
        Modellbaum
        <svg class="ml-auto h-[22px] w-[26px]"><use href="#wrench"/></svg>
        <svg class="ml-[6px] h-[5px] w-[7px]"><use href="#dd"/></svg>
        <svg class="ml-[7px] h-[22px] w-[18px]"><use href="#lst"/></svg>
        <svg class="ml-[5px] mr-[4px] h-[5px] w-[7px]"><use href="#dd"/></svg>
      </div>
      <div class="flex h-[29px] items-center">
        <div class="flex h-[29px] w-[281px] items-center justify-end border-y border-r border-[#d8d8d8] bg-white pr-[11px] text-[#999]">
          <svg class="h-[9px] w-[9px]" viewBox="0 0 9 9"><path d="M1 1l7 7M8 1L1 8" stroke="#888"/></svg>
        </div>
        <svg class="ml-[6px] h-[5px] w-[7px]"><use href="#dd"/></svg>
        <svg class="ml-[12px] h-[18px] w-[18px]"><use href="#bino"/></svg>
        <svg class="ml-[8px] h-[18px] w-[18px]"><use href="#funnel"/></svg>
        <svg class="ml-[9px] h-[12px] w-[12px]"><use href="#plus"/></svg>
      </div>
      <div class="mt-[4px] flex h-[22px] border-y border-[#dcdcdc] bg-gradient-to-b from-[#fbfbfb] to-[#eceded]">
        <div class="w-[187px] border-r border-[#dcdcdc]"></div>
        <div class="w-[112px] border-r border-[#dcdcdc] pl-[7px] font-bold tracking-[0.3px] leading-[23px] text-[#555]">KE-Nr.</div>
      </div>
      <div class="relative h-[760px] pt-[1px] tracking-[0.25px]">
        <div class="absolute bottom-0 left-[186px] top-0 border-l border-[#f0f0f0]"></div>
        <div class="flex h-[18px] items-center"><svg class="ml-[4px] mr-[8px] h-[14px] w-[14px]"><use href="#rootp"/></svg><span class="tracking-[-0.35px]">ASM0001.ASM</span></div>
        <div class="flex h-[18px] items-center"><svg class="ml-[21px] mr-[7px] h-[18px] w-[18px]"><use href="#plane2"/></svg><span class="w-[158px]">SIDE-ASM</span><span>1</span></div>
        <div class="flex h-[18px] items-center"><svg class="ml-[21px] mr-[7px] h-[18px] w-[18px]"><use href="#plane2"/></svg><span class="w-[158px]">TOP-ASM</span><span>2</span></div>
        <div class="flex h-[18px] items-center"><svg class="ml-[21px] mr-[7px] h-[18px] w-[18px]"><use href="#plane2"/></svg><span class="w-[158px]">FRONT-ASM</span><span>3</span></div>
        <div class="flex h-[18px] items-center"><svg class="ml-[21px] mr-[7px] h-[18px] w-[18px]"><use href="#ax"/></svg><span class="w-[158px]">X-AXIS-ASM</span><span>4</span></div>
        <div class="flex h-[18px] items-center"><svg class="ml-[21px] mr-[7px] h-[18px] w-[18px]"><use href="#cs"/></svg><span class="w-[158px]">COORD-ASM</span><span>5</span></div>
        <div class="flex h-[18px] items-center"><svg class="ml-[9px] mr-[7px] h-[9px] w-[7px]" viewBox="0 0 7 9"><path d="M0 0l7 4.500L0 9z" fill="#999"/></svg><svg class="mr-[9px] h-[14px] w-[14px]"><use href="#part"/></svg><span class="w-[158px]">PRT0002.PRT</span><span>6</span></div>
        <div class="flex h-[18px] items-center"><svg class="ml-[25px] mr-[9px] h-[12px] w-[12px]"><use href="#here"/></svg>Hier einfügen</div>
      </div>
    </div>
  </aside>

  <div class="flex min-w-0 flex-1 flex-col">
    <!-- graphics window -->
    <div class="relative h-[880px] bg-[#011235]">
      <svg class="absolute inset-0 h-[880px] w-[1518px]" viewBox="384 196 1518 880">
        <defs>
          <g id="pin"><path d="M-20 47H20L2 65h-3z" fill="url(#gPin)"/><path d="M-20-15H20V47q-20 6-40 0z" fill="url(#gPin)"/></g>
          <g id="sock">
            <circle cx="7" cy="2" r="39" fill="none" stroke="#0a4f2a" stroke-dasharray="60 4"/>
            <ellipse cx="0" cy="0" rx="36" ry="37" fill="#04501f"/>
            <ellipse cx="3" cy="0" rx="31" ry="31" fill="#a8842a" stroke="#3e3a10" stroke-width="2"/>
            <path d="M-14-18L-25-6M-8 19L-18 26M20-22L27-14" stroke="#3e3a10" stroke-width="1.500"/>
            <ellipse cx="5" cy="0" rx="24" ry="26" fill="#16501c" stroke="#4a3a10"/>
            <ellipse cx="10" cy="0" rx="18" ry="23" fill="url(#gCone)"/>
          </g>
          <g id="clip"><path d="M5 0h38l2 22-4 22H4L0 24z" fill="url(#gPin)"/><path d="M18 0v44M28 0v44M0 24h14M30 24h15" stroke="#555"/></g>
          <path id="grn" d="M778 507L1247 540Q1269 545 1268 562L1263 600Q1258 630 1238 629L790 597Q770 594 767 587L758 530Q758 510 778 507Z"/>
        </defs>
        <use href="#clip" transform="translate(696 634)"/>
        <use href="#clip" transform="translate(1349 684)"/>
        <use href="#pin" transform="translate(854 643)"/>
        <use href="#pin" transform="translate(973 653)"/>
        <use href="#pin" transform="translate(1068 660)"/>
        <use href="#pin" transform="translate(1161 667)"/>
        <use href="#pin" transform="translate(1256 675)"/>
        <path d="M1393 656h7v-3h10v3h13v29h-30z" fill="#3d3d3d"/>
        <path d="M683 453Q672 453 668 462L655 617L660 630L1390 685L1396 640L1403 520Q1403 508 1392 506Z" fill="url(#gPlate)"/>
        <path d="M660 630L1390 685" stroke="#8a8a8a" fill="none"/>
        <path d="M792 491L1255 526Q1300 530 1302 570L1291 612Q1281 646 1245 644L800 611Q770 607 760 590Q747 570 749 540Q752 494 792 491Z" fill="#222"/>
        <path d="M792 494L1255 529Q1297 533 1301 570L1291 612Q1281 646 1245 644L800 611Q770 607 760 590Q748 570 750 541Q753 497 792 494Z" fill="#8a8a8a"/>
        <path d="M792 498L1253 533Q1294 537 1300 570L1289 612Q1280 645 1245 643L800 610Q771 606 761 590Q749 570 751 541Q754 500 792 498Z" fill="#cfcfcf"/>
        <use href="#grn" fill="#9a9a9a" transform="translate(2 9)"/>
        <use href="#grn" fill="#0e0e0e" transform="translate(1 5)"/>
        <use href="#grn" fill="#21ad59"/>
        <use href="#sock" transform="translate(811 553)"/>
        <use href="#sock" transform="translate(928 562)"/>
        <use href="#sock" transform="translate(1022 569)"/>
        <use href="#sock" transform="translate(1117 577)"/>
        <use href="#sock" transform="translate(1211 584)"/>
        <g font-size="13" fill="#0b4a2a" font-family="Liberation Sans"><text x="758" y="528">A</text><text x="972" y="545">A</text><text x="1066" y="552">A₂</text><text x="1160" y="560">A₁</text></g>
        <ellipse cx="705" cy="542" rx="19" ry="22" fill="#d0d0d0" stroke="#808080"/><ellipse cx="705" cy="542" rx="14" ry="17" fill="#011235" stroke="#555" stroke-width="2"/>
        <ellipse cx="1357" cy="593" rx="19" ry="22" fill="#d0d0d0" stroke="#808080"/><ellipse cx="1357" cy="593" rx="14" ry="17" fill="#011235" stroke="#555" stroke-width="2"/>
      </svg>

      <!-- floating view toolbar -->
      <div class="absolute left-[503px] top-[7px] flex h-[31px] w-[509px] divide-x divide-[#e4e4e4] bg-[#fbfbfd] pl-[4px]">
        <svg class="h-[31px] w-[31px] p-[4px]"><use href="#zfit"/></svg>
        <svg class="h-[31px] w-[31px] p-[4px]"><use href="#zin"/></svg>
        <svg class="h-[31px] w-[31px] p-[4px]"><use href="#zout"/></svg>
        <svg class="h-[31px] w-[32px] p-[4px]"><use href="#repaint"/></svg>
        <svg class="h-[31px] w-[32px] p-[4px]"><use href="#vcube"/></svg>
        <svg class="h-[31px] w-[32px] p-[4px]"><use href="#vab"/></svg>
        <svg class="h-[31px] w-[31px] p-[4px]"><use href="#tcam"/></svg>
        <svg class="h-[31px] w-[32px] p-[4px]"><use href="#expl"/></svg>
        <svg class="h-[31px] w-[31px] p-[4px]"><use href="#orient"/></svg>
        <svg class="h-[31px] w-[33px] p-[4px]"><use href="#datm"/></svg>
        <svg class="h-[31px] w-[32px] p-[4px]"><use href="#eyep"/></svg>
        <svg class="h-[31px] w-[31px] p-[4px]"><use href="#eyea"/></svg>
        <svg class="h-[31px] w-[31px] p-[4px]"><use href="#eyex"/></svg>
        <svg class="h-[31px] w-[31px] p-[4px]"><use href="#eyec"/></svg>
        <svg class="h-[31px] w-[31px] p-[4px]"><use href="#eyen"/></svg>
        <svg class="h-[31px] w-[31px] p-[4px]"><use href="#spin"/></svg>
      </div>

      <!-- Schrumpfverpackung dialog -->
      <div class="absolute left-[1110px] top-px h-[623px] w-[408px] overflow-hidden border-l-[3px] border-b-[3px] border-[#e4e7ec] bg-[#eff0f2] text-[#5a5a5a] tracking-[0.2px]">
        <div class="relative flex h-[25px] items-center justify-center border-b border-[#d8dadc] pr-[12px] pt-[2px] text-[14px] font-bold tracking-[0.7px] text-[#adadad]">
          Schrumpfverpackung erzeugen
          <svg class="absolute right-[3px] top-[9px] h-[9px] w-[9px]" viewBox="0 0 9 9"><path d="M1 1l7 7M8 1L1 8" stroke="#b4b4b4" stroke-width="2"/></svg>
        </div>
        <div class="pl-[3px]">
          <div class="relative mt-[7px] h-[76px] border border-r-0 border-[#cdd0d2] pl-[12px] pt-[11px]">
            <span class="absolute -top-[6px] left-[13px] bg-[#eff0f2] px-1 text-[12px] font-bold leading-[14px] tracking-normal text-[#333]">Erzeugungsmethode</span>
            <div class="flex h-[18px] items-center gap-[7px]"><i class="h-[13px] w-[13px] rounded-full border border-[#a8a8a8] bg-[#f8f8f8]"></i>Flächen-Untermenge</div>
            <div class="flex h-[18px] items-center gap-[7px]"><i class="flex h-[13px] w-[13px] items-center justify-center rounded-full border border-[#a8a8a8] bg-[#f8f8f8]"><i class="h-[7px] w-[7px] rounded-full bg-[#333]"></i></i>Facettierter Volumenkörper</div>
            <div class="flex h-[18px] items-center gap-[7px]"><i class="h-[13px] w-[13px] rounded-full border border-[#a8a8a8] bg-[#f8f8f8]"></i>Zusammengeführter Volumenkörper</div>
          </div>
          <div class="relative mt-[9px] h-[44px] border border-r-0 border-[#cdd0d2] pl-[157px] pt-[12px]">
            <span class="absolute -top-[6px] left-[13px] bg-[#eff0f2] px-1 text-[12px] font-bold leading-[14px] tracking-normal text-[#333]">Qualität</span>
            <div class="flex h-[22px] items-center gap-[5px]">Grad:
              <div class="flex h-[22px] w-[52px] items-center justify-between border border-[#c4c6c8] bg-white pl-[3px] text-[#333]">8
                <span class="flex h-full w-[15px] flex-col items-center justify-around border-l border-[#ddd] bg-[#f4f4f4] py-[3px]">
                  <svg class="h-[4px] w-[7px]" viewBox="0 0 7 4"><path d="M3.500 0L7 4H0z" fill="#555"/></svg>
                  <svg class="h-[4px] w-[7px]" viewBox="0 0 7 4"><path d="M0 0h7L3.500 4z" fill="#555"/></svg>
                </span>
              </div>
            </div>
          </div>
          <div class="relative mt-[9px] h-[154px] border border-r-0 border-[#cdd0d2] pl-[12px] pt-[9px]">
            <span class="absolute -top-[6px] left-[13px] bg-[#eff0f2] px-1 text-[12px] font-bold leading-[14px] tracking-normal text-[#333]">Besondere Handhabung</span>
            <div class="flex h-[22px] items-center gap-[7px]"><i class="h-[13px] w-[13px] border border-[#999] bg-[#fafafa]"></i>Löcher füllen</div>
            <div class="flex h-[22px] items-center gap-[7px]"><i class="relative h-[13px] w-[13px] border border-[#999] bg-[#fafafa]"><svg class="absolute -top-[2px] left-0 h-[14px] w-[15px]" viewBox="0 0 15 14"><path d="M1 7l4 5 9-11-9 7z" fill="#111" stroke="#111"/></svg></i>Skelette ignorieren</div>
            <div class="flex h-[22px] items-center gap-[7px]"><i class="relative h-[13px] w-[13px] border border-[#999] bg-[#fafafa]"><svg class="absolute -top-[2px] left-0 h-[14px] w-[15px]" viewBox="0 0 15 14"><path d="M1 7l4 5 9-11-9 7z" fill="#111" stroke="#111"/></svg></i>SammelFlä ignorieren</div>
            <div class="flex h-[22px] items-center gap-[7px] text-[#aaa]"><i class="relative h-[13px] w-[13px] border border-[#c8c8c8] bg-[#ececec]"><svg class="absolute -top-[1px] left-0 h-[13px] w-[13px]" viewBox="0 0 15 14"><path d="M1 7l4 5 9-11-9 7z" fill="#bbb"/></svg></i>Kleine Flächen ignorieren</div>
            <div class="flex h-[26px] items-center gap-[2px] pl-[37px] text-[#aaa]">Schwellenwert in Prozent der Modellgröße:
              <div class="flex h-[21px] w-[51px] items-center justify-between border border-[#dcdcdc] bg-[#f1f2f3] pl-[3px]">0
                <span class="flex h-full w-[15px] flex-col items-center justify-around border-l border-[#e2e2e2] py-[3px]">
                  <svg class="h-[4px] w-[7px]" viewBox="0 0 7 4"><path d="M3.500 0L7 4H0z" fill="#bbb"/></svg>
                  <svg class="h-[4px] w-[7px]" viewBox="0 0 7 4"><path d="M0 0h7L3.500 4z" fill="#bbb"/></svg>
                </span>
              </div>
            </div>
            <div class="flex h-[22px] items-center gap-[7px]"><i class="h-[13px] w-[13px] border border-[#999] bg-[#fafafa]"></i>Masseneigenschaften zuweisen</div>
          </div>
          <div class="relative mt-[9px] h-[44px] border border-r-0 border-[#cdd0d2] pl-[9px] pt-[11px]">
            <span class="absolute -top-[6px] left-[13px] bg-[#eff0f2] px-1 text-[12px] font-bold leading-[14px] tracking-normal text-[#333]">Bezugsreferenzen einschließen</span>
            <div class="flex h-[22px] items-center gap-[5px]"><div class="flex h-[22px] w-[33px] items-center justify-center rounded-[2px] border border-[#c4c6c8] bg-gradient-to-b from-[#f8f8f8] to-[#e4e4e4]"><svg class="h-[15px] w-[12px]"><use href="#arrow"/></svg></div>Bezüge auswählen</div>
          </div>
          <div class="relative mt-[19px] h-[112px] border border-r-0 border-[#cdd0d2] pl-[9px] pt-[13px]">
            <span class="absolute -top-[6px] left-[13px] bg-[#eff0f2] px-1 text-[12px] font-bold leading-[14px] tracking-normal text-[#333]">Optionen für Facettierte Volumenkörper</span>
            <div class="flex h-[22px] items-center gap-[3px] pl-[2px]"><div class="flex h-[22px] w-[33px] items-center justify-center rounded-[2px] border border-[#e2e2e2] bg-[#ececee]"><svg class="h-[15px] w-[12px]"><use href="#arrowg"/></svg></div>Dreieckpaare umkehren</div>
            <div class="relative mt-[12px] h-[54px] w-[383px] border border-[#cdd0d2] pl-[10px] pt-[9px]">
              <span class="absolute -top-[6px] left-[13px] bg-[#eff0f2] px-1 text-[12px] font-bold leading-[14px] tracking-normal text-[#333]">Ausgabeformat</span>
              <div class="grid grid-cols-[184px_1fr]">
                <div class="flex h-[18px] items-center gap-[7px]"><i class="flex h-[13px] w-[13px] items-center justify-center rounded-full border border-[#a8a8a8] bg-[#f8f8f8]"><i class="h-[7px] w-[7px] rounded-full bg-[#333]"></i></i>Teil</div>
                <div class="flex h-[18px] items-center gap-[7px]"><i class="h-[13px] w-[13px] rounded-full border border-[#a8a8a8] bg-[#f8f8f8]"></i>STL</div>
                <div class="flex h-[18px] items-center gap-[7px]"><i class="h-[13px] w-[13px] rounded-full border border-[#a8a8a8] bg-[#f8f8f8]"></i>L-Teil</div>
                <div class="flex h-[18px] items-center gap-[7px]"><i class="h-[13px] w-[13px] rounded-full border border-[#a8a8a8] bg-[#f8f8f8]"></i>VRML</div>
              </div>
            </div>
          </div>
          <div class="relative mt-[9px] h-[68px] border border-r-0 border-[#cdd0d2] pl-[9px] pt-[12px]">
            <span class="absolute -top-[6px] left-[13px] bg-[#eff0f2] px-1 text-[12px] font-bold leading-[14px] tracking-normal text-[#333]">Name der Ausgabedatei</span>
            <div class="flex h-[24px] w-[383px] items-center border border-[#c4c6c8] bg-white pl-[3px]">asm0001_sw0001</div>
            <div class="mt-[2px] flex h-[22px] items-center gap-[7px] pl-[3px]"><i class="h-[13px] w-[13px] border border-[#999] bg-[#fafafa]"></i>Standardschablone verwenden</div>
          </div>
          <div class="mt-[7px] flex gap-[5px] font-bold tracking-[0.6px] text-[#444]">
            <div class="flex h-[23px] w-[131px] shrink-0 items-center justify-center rounded-[2px] border border-[#cdd0d2] bg-[#f3f4f5]">OK</div>
            <div class="flex h-[23px] w-[131px] shrink-0 items-center justify-center rounded-[2px] border border-[#cdd0d2] bg-[#f3f4f5]">Vorschau</div>
            <div class="flex h-[23px] w-[131px] shrink-0 items-center justify-center rounded-[2px] border border-[#cdd0d2] bg-[#f3f4f5]">Schließen</div>
          </div>
        </div>
      </div>
    </div>

    <!-- saved views strip -->
    <div class="mt-[7px] flex h-[20px] border-y border-[#e4e4e4] text-[14px] tracking-[0.6px] text-[#444]">
      <div class="flex w-[72px] items-center gap-[6px] pl-[2px]">
        <svg class="h-[9px] w-[10px]" viewBox="0 0 10 9"><path d="M5 0v9L0 4.500zM10 0v9L5 4.500z" fill="#888"/></svg>
        <svg class="h-[9px] w-[6px]" viewBox="0 0 6 9"><path d="M6 0v9L0 4.500z" fill="#bbb"/></svg>
        <svg class="h-[9px] w-[6px]" viewBox="0 0 6 9"><path d="M0 0v9l6-4.500z" fill="#bbb"/></svg>
        <svg class="h-[9px] w-[10px]" viewBox="0 0 10 9"><path d="M0 0v9l5-4.500zM5 0v9l5-4.500z" fill="#888"/></svg>
      </div>
      <div class="flex w-[19px] items-center justify-center border-x border-[#ddd] bg-[#eeeff1] text-[#aaa]">+</div>
      <div class="flex w-[111px] items-center justify-center pr-[3px]">Standard Alle</div>
      <div class="flex w-[52px] items-center justify-center border-l border-[#dcdcdc] bg-[#eeeff1] pr-[3px]">Front</div>
      <div class="flex w-[41px] items-center justify-center border-l border-[#dcdcdc] bg-[#eeeff1] pr-[3px]">Left</div>
      <div class="flex w-[43px] items-center justify-center border-l border-[#dcdcdc] bg-[#eeeff1] pr-[3px]">Top</div>
      <div class="flex w-[53px] items-center justify-center border-l border-[#dcdcdc] bg-[#eeeff1] pr-[3px]">Right</div>
      <div class="flex w-[63px] items-center justify-center border-l border-[#dcdcdc] bg-[#eeeff1] pr-[3px]">Bottom</div>
      <div class="flex w-[71px] items-center justify-center border-x border-[#dcdcdc] bg-[#eeeff1] pr-[3px]">Back</div>
    </div>
  </div>
</main>

<!-- status bar -->
<footer class="flex h-[47px] items-center border-t-2 border-[#9b9c9e] bg-[#f0f1f3]">
  <svg class="ml-[1px] mt-[12px] h-[20px] w-[20px] bg-[#e2e3e6] p-[1px]"><use href="#ftree"/></svg>
  <svg class="ml-[6px] mt-[12px] h-[24px] w-[20px]"><use href="#globe"/></svg>
  <b class="ml-[10px] mt-[12px] h-[24px] w-px bg-[#d0d0d0]"></b>
  <div class="ml-[3px] whitespace-nowrap text-[11px] leading-[17px] tracking-[-0.12px] text-[#444]">
    <div class="flex items-center gap-[7px] pl-[3px]"><i class="h-[5px] w-[5px] rounded-full bg-[#1a22c0]"></i>C:\Temp.CAD\Templates-Creo20\axa-standard.prt wird als Schablone verwendet.</div>
    <div class="flex items-center gap-[2px]"><svg class="h-[13px] w-[12px]"><use href="#kg"/></svg>Keine Geometrie ausgewählt.</div>
  </div>
  <div class="ml-auto mr-[14px] mt-[4px] flex h-[30px] items-center">
    <b class="h-[30px] w-px bg-[#dcdcdc]"></b>
    <b class="ml-[35px] h-[30px] w-px bg-[#dcdcdc]"></b>
    <i class="ml-[3px] h-[11px] w-[11px] rounded-full bg-[#3fcb52]"></i>
    <i class="ml-[2px] h-[7px] w-[7px] rounded-full bg-[#d4d4d4]"></i>
    <i class="ml-px h-[7px] w-[7px] rounded-full bg-[#d4d4d4]"></i>
    <b class="ml-[2px] h-[30px] w-px bg-[#dcdcdc]"></b>
    <div class="ml-[3px] flex h-[28px] w-[40px] items-center justify-center rounded-[3px] border border-[#d4d4d4]"><svg class="h-[18px] w-[18px]"><use href="#bino"/></svg></div>
    <div class="ml-[5px] flex h-[28px] w-[40px] items-center justify-center rounded-[3px] border border-[#d4d4d4]"><svg class="h-[18px] w-[18px]"><use href="#scube"/></svg></div>
    <div class="ml-[96px] flex h-[23px] w-[190px] items-center justify-between border border-[#d0d0d0] bg-[#f8f8f8] pl-[6px] tracking-[0.4px] text-[#555]">Smart
      <span class="flex h-full w-[14px] items-center justify-center border-l border-[#d0d0d0]"><svg class="h-[5px] w-[7px]"><use href="#dd"/></svg></span>
    </div>
  </div>
</footer>
</body>
</html>
